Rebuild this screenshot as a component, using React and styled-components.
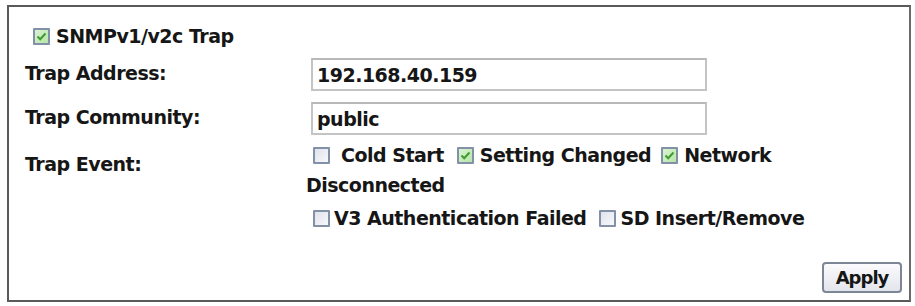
import React from "react";
import styled, { createGlobalStyle } from "styled-components";

const GlobalStyle = createGlobalStyle`
	html, body {
		margin: 0;
		padding: 0;
		background: #ffffff;
	}
	body {
		font-family: "DejaVu Sans", Verdana, sans-serif;
		color: #161616;
	}
`;

const Page = styled.div`
	width: 915px;
	height: 306px;
	padding: 5px 0 0 7px;
	box-sizing: border-box;
	overflow: hidden;
`;

const Frame = styled.div`
	width: 904px;
	height: 297px;
	box-sizing: border-box;
	border: 2px solid #5a5a5a;
	border-right-color: #6a6a6a;
	padding: 18px 7px 7px 16px;
	display: flex;
	flex-direction: column;
	font-weight: bold;
	font-size: 19px;
	letter-spacing: -0.5px;
`;

const Form = styled.div`
	display: grid;
	grid-template-columns: 281px 1fr;
	row-gap: 11px;
`;

const Label = styled.div`
	display: flex;
	align-items: ${({ top }) => (top ? "flex-start" : "center")};
	padding-top: ${({ top }) => (top ? "7px" : "0")};
	padding-bottom: ${({ top }) => (top ? "0" : "3px")};
`;

const Cell = styled.div`
	display: flex;
	align-items: center;
`;

const Field = styled.div`
	margin-left: 5px;
	width: 396px;
	height: 33px;
	box-sizing: border-box;
	border: 2px solid #c4c4c4;
	border-top-color: #b8b8b8;
	padding: 0 0 0 4px;
	display: flex;
	align-items: center;
	background: #fff;
`;

const Span = styled.div`
	grid-column: 1 / span 2;
	display: flex;
	align-items: center;
	margin-left: 8px;
`;

const Events = styled.div`
	margin-top: -6px;
	width: 600px;
`;

const Line = styled.div`
	display: flex;
	align-items: center;
	height: 30px;
	margin-top: ${({ mt }) => mt || 0}px;
`;

const Check = styled.span`
	display: inline-flex;
	align-items: center;
	margin-left: ${({ first }) => (first ? "7px" : "0")};
	margin-right: ${({ gap }) => gap || 0}px;
`;

const Box = styled.span`
	width: 17px;
	height: 17px;
	flex: none;
	box-sizing: border-box;
	border: 2px solid #8290a8;
	border-radius: 1px;
	background: ${({ on }) =>
		on
			? "linear-gradient(135deg, #d9f3d2, #b7e5a9)"
			: "linear-gradient(135deg, #e0e3ec, #f8f8fb)"};
	display: inline-flex;
	align-items: center;
	justify-content: center;
	margin-right: ${({ space }) => space || 6}px;
`;

const Footer = styled.div`
	margin-top: auto;
	display: flex;
	justify-content: flex-end;
`;

const Button = styled.button`
	width: 80px;
	height: 31px;
	border: 2px solid #7d8696;
	border-radius: 4px;
	background: linear-gradient(#fbfbfd, #e4e5ec);
	font-family: "DejaVu Sans", Verdana, sans-serif;
	font-weight: bold;
	font-size: 18px;
	letter-spacing: -1px;
	color: #161616;
	padding: 0;
`;

const Tick = () => (
	<svg width="11" height="9" viewBox="0 0 11 9">
		<path d="M1.5 4.5 L4.2 7.2 L9.5 1.5" fill="none" stroke="#3f9b2e" strokeWidth="2" />
	</svg>
);

const CheckItem = ({ on, label, first, gap, space }) => (
	<Check first={first} gap={gap}>
		<Box on={on} space={space}>{on && <Tick />}</Box>
		{label}
	</Check>
);

const App = () => {
	return (
		<Page>
			<GlobalStyle />
			<Frame>
				<Form>
					<Span>
						<Box on space={6}>
							<Tick />
						</Box>
						SNMPv1/v2c Trap
					</Span>
					<Label>Trap Address:</Label>
					<Cell>
						<Field>192.168.40.159</Field>
					</Cell>
					<Label>Trap Community:</Label>
					<Cell>
						<Field>public</Field>
					</Cell>
					<Label top>Trap Event:</Label>
					<Events>
						<Line>
							<CheckItem first label="Cold Start" gap={13} space={11} />
							<CheckItem on label="Setting Changed" gap={10} space={6} />
							<CheckItem on label="Network" space={6} />
						</Line>
						<Line>Disconnected</Line>
						<Line mt={3}>
							<CheckItem first label="V3 Authentication Failed" gap={13} space={4} />
							<CheckItem label="SD Insert/Remove" space={4} />
						</Line>
					</Events>
				</Form>
				<Footer>
					<Button>Apply</Button>
				</Footer>
			</Frame>
		</Page>
	);
};

export default App;
